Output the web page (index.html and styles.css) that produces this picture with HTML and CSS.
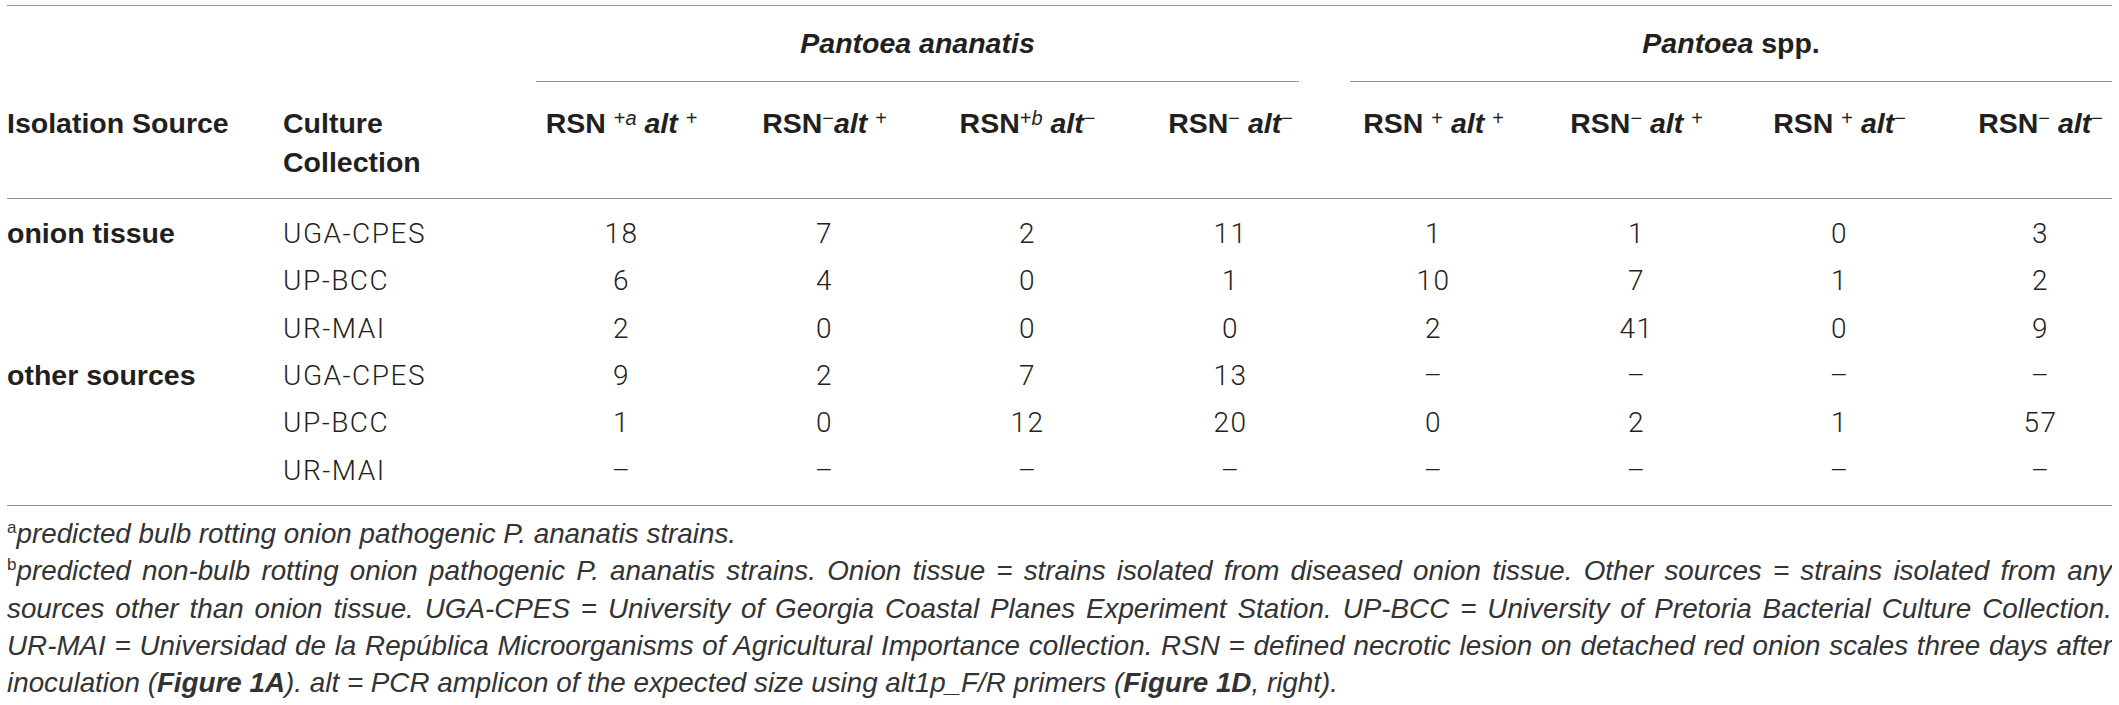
FILE: index.html
```html
<!DOCTYPE html>
<html lang="en">
<head>
    <meta charset="UTF-8">
    <meta name="viewport" content="width=device-width, initial-scale=1.0">
    <title>Pantoea strains by isolation source</title>
    <link rel="stylesheet" href="styles.css">
</head>
<body>
    <div class="table-wrap">
        <table class="strains">
            <colgroup>
                <col class="col-source">
                <col class="col-culture">
                <col class="col-num">
                <col class="col-num">
                <col class="col-num">
                <col class="col-num">
                <col class="col-num">
                <col class="col-num">
                <col class="col-num">
                <col class="col-last">
            </colgroup>
            <thead>
                <tr class="group-row">
                    <th></th>
                    <th></th>
                    <th colspan="4"><div class="group ananatis"><i>Pantoea ananatis</i></div></th>
                    <th colspan="4"><div class="group spp"><i>Pantoea</i> spp.</div></th>
                </tr>
                <tr class="label-row">
                    <th class="left">Isolation Source</th>
                    <th class="left">Culture<br>Collection</th>
                    <th>RSN <sup>+<i>a</i></sup> <i>alt</i> <sup>+</sup></th>
                    <th>RSN<sup>&minus;</sup><i>alt</i> <sup>+</sup></th>
                    <th>RSN<sup>+<i>b</i></sup> <i>alt</i><sup>&minus;</sup></th>
                    <th>RSN<sup>&minus;</sup> <i>alt</i><sup>&minus;</sup></th>
                    <th>RSN <sup>+</sup> <i>alt</i> <sup>+</sup></th>
                    <th>RSN<sup>&minus;</sup> <i>alt</i> <sup>+</sup></th>
                    <th>RSN <sup>+</sup> <i>alt</i><sup>&minus;</sup></th>
                    <th class="last">RSN<sup>&minus;</sup> <i>alt</i><sup>&minus;</sup></th>
                </tr>
            </thead>
            <tbody>
                <tr>
                    <td class="source">onion tissue</td>
                    <td class="left">UGA-CPES</td>
                    <td>18</td><td>7</td><td>2</td><td>11</td>
                    <td>1</td><td>1</td><td>0</td><td class="last">3</td>
                </tr>
                <tr>
                    <td class="source"></td>
                    <td class="left">UP-BCC</td>
                    <td>6</td><td>4</td><td>0</td><td>1</td>
                    <td>10</td><td>7</td><td>1</td><td class="last">2</td>
                </tr>
                <tr>
                    <td class="source"></td>
                    <td class="left">UR-MAI</td>
                    <td>2</td><td>0</td><td>0</td><td>0</td>
                    <td>2</td><td>41</td><td>0</td><td class="last">9</td>
                </tr>
                <tr>
                    <td class="source">other sources</td>
                    <td class="left">UGA-CPES</td>
                    <td>9</td><td>2</td><td>7</td><td>13</td>
                    <td>&ndash;</td><td>&ndash;</td><td>&ndash;</td><td class="last">&ndash;</td>
                </tr>
                <tr>
                    <td class="source"></td>
                    <td class="left">UP-BCC</td>
                    <td>1</td><td>0</td><td>12</td><td>20</td>
                    <td>0</td><td>2</td><td>1</td><td class="last">57</td>
                </tr>
                <tr>
                    <td class="source"></td>
                    <td class="left">UR-MAI</td>
                    <td>&ndash;</td><td>&ndash;</td><td>&ndash;</td><td>&ndash;</td>
                    <td>&ndash;</td><td>&ndash;</td><td>&ndash;</td><td class="last">&ndash;</td>
                </tr>
            </tbody>
        </table>

        <!-- footnote lines kept as set in the source table -->
        <div class="notes">
            <p><sup>a</sup>predicted bulb rotting onion pathogenic P. ananatis strains.</p>
            <p>
                <span class="line"><sup>b</sup>predicted non-bulb rotting onion pathogenic P. ananatis strains. Onion tissue = strains isolated from diseased onion tissue. Other sources = strains isolated from any</span>
                <span class="line">sources other than onion tissue. UGA-CPES = University of Georgia Coastal Planes Experiment Station. UP-BCC = University of Pretoria Bacterial Culture Collection.</span>
                <span class="line">UR-MAI = Universidad de la República Microorganisms of Agricultural Importance collection. RSN = defined necrotic lesion on detached red onion scales three days after</span>
                <span class="line">inoculation (<b>Figure 1A</b>). alt = PCR amplicon of the expected size using alt1p_F/R primers (<b>Figure 1D</b>, right).</span>
            </p>
        </div>
    </div>
</body>
</html>
```

FILE: styles.css
```css
body {
    margin: 5px 7px 0;
    background-color: #fff;
    color: #231f20;
    font-family: Roboto, "Liberation Sans", sans-serif;
    font-weight: 300;
}
.strains {
    width: 2105px;
    table-layout: fixed;
    border-collapse: collapse;
    border-top: 1px solid #939393;
    border-bottom: 1px solid #939393;
    font-size: 28px;
}
.col-source {
    width: 276px;
}
.col-culture {
    width: 237px;
}
.col-num {
    width: 203px;
}
.col-last {
    width: 171px;
}
th, td {
    padding: 0;
    text-align: center;
}
thead th {
    font-family: "Liberation Sans", Arial, sans-serif;
    font-weight: 700;
    font-size: 28.5px;
}
.group-row th {
    padding-top: 20px;
    line-height: 34px;
}
.group {
    border-bottom: 1px solid #939393;
    padding-bottom: 21px;
}
.group.ananatis {
    margin: 0 33px 0 16px;
}
.group.spp {
    margin-left: 18px;
}
.label-row th {
    line-height: 39px;
    padding: 22px 0 16px;
    vertical-align: top;
    border-bottom: 1px solid #939393;
}
.label-row sup {
    font-size: 20px;
    font-weight: 400;
    line-height: 0;
    vertical-align: 8px;
}
th.left, td.left {
    text-align: left;
}
th.last, td.last {
    padding-left: 28px;
}
tbody td {
    line-height: 47.33px;
    letter-spacing: 1.5px;
}
tbody tr:first-child td {
    padding-top: 11px;
}
tbody tr:last-child td {
    padding-bottom: 11px;
}
td.source {
    text-align: left;
    font-family: "Liberation Sans", Arial, sans-serif;
    font-weight: 700;
    font-size: 28.5px;
    letter-spacing: 0;
}
.notes {
    width: 2105px;
    margin-top: 9px;
    color: #333;
    font-family: "Liberation Sans", Arial, sans-serif;
    font-weight: 400;
    font-size: 27.8px;
    font-style: italic;
    line-height: 37.3px;
}
.notes p {
    margin: 0;
}
.notes .line {
    display: block;
    white-space: nowrap;
    text-align: justify;
    text-align-last: justify;
}
.notes .line:last-child {
    text-align-last: left;
}
.notes sup {
    font-style: normal;
    font-size: 17px;
    line-height: 0;
    vertical-align: 10px;
}
.notes b {
    font-weight: 700;
}
```
